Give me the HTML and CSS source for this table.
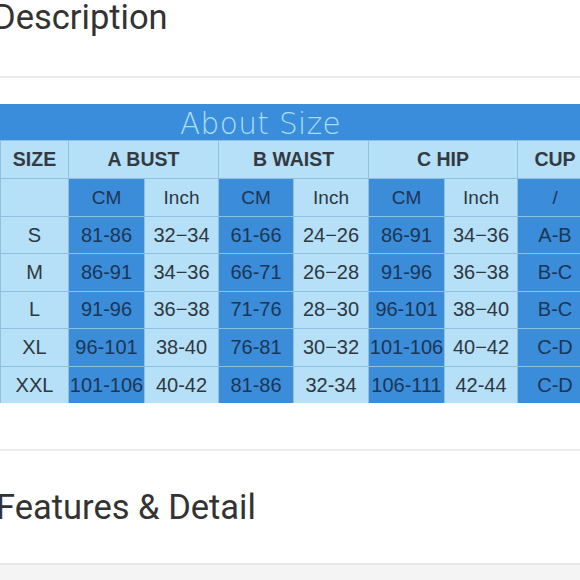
FILE: index.html
```html
<!DOCTYPE html>
<html>
<head>
<meta charset="utf-8">
<link rel="stylesheet" href="styles.css">
</head>
<body>
<div class="page">
  <section class="sec sec-desc">
    <h2 class="sec-title">Description</h2>
  </section>
  <section class="sec sec-table">
    <div class="size-chart">
      <div class="chart-title">About Size</div>
      <table class="chart">
        <colgroup>
          <col class="c-size"><col class="c-cm"><col class="c-in"><col class="c-cm2"><col class="c-in2"><col class="c-cm3"><col class="c-in3"><col class="c-cup">
        </colgroup>
        <tr class="head">
          <th>SIZE</th>
          <th colspan="2">A BUST</th>
          <th colspan="2">B WAIST</th>
          <th colspan="2">C HIP</th>
          <th>CUP</th>
        </tr>
        <tr class="sub">
          <td class="lt"></td>
          <td class="dk">CM</td><td class="lt">Inch</td>
          <td class="dk">CM</td><td class="lt">Inch</td>
          <td class="dk">CM</td><td class="lt">Inch</td>
          <td class="dk">/</td>
        </tr>
        <tr>
          <td class="lt">S</td>
          <td class="dk">81-86</td><td class="lt">32−34</td>
          <td class="dk">61-66</td><td class="lt">24−26</td>
          <td class="dk">86-91</td><td class="lt">34−36</td>
          <td class="dk">A-B</td>
        </tr>
        <tr>
          <td class="lt">M</td>
          <td class="dk">86-91</td><td class="lt">34−36</td>
          <td class="dk">66-71</td><td class="lt">26−28</td>
          <td class="dk">91-96</td><td class="lt">36−38</td>
          <td class="dk">B-C</td>
        </tr>
        <tr>
          <td class="lt">L</td>
          <td class="dk">91-96</td><td class="lt">36−38</td>
          <td class="dk">71-76</td><td class="lt">28−30</td>
          <td class="dk">96-101</td><td class="lt">38−40</td>
          <td class="dk">B-C</td>
        </tr>
        <tr>
          <td class="lt">XL</td>
          <td class="dk">96-101</td><td class="lt">38-40</td>
          <td class="dk">76-81</td><td class="lt">30−32</td>
          <td class="dk">101-106</td><td class="lt">40−42</td>
          <td class="dk">C-D</td>
        </tr>
        <tr>
          <td class="lt">XXL</td>
          <td class="dk">101-106</td><td class="lt">40-42</td>
          <td class="dk">81-86</td><td class="lt">32-34</td>
          <td class="dk">106-111</td><td class="lt">42-44</td>
          <td class="dk">C-D</td>
        </tr>
      </table>
    </div>
  </section>
  <section class="sec sec-feat">
    <h2 class="sec-title">Features &amp; Detail</h2>
  </section>
  <div class="rest"></div>
</div>
</body>
</html>
```
FILE: styles.css
```css
html, body {
  margin: 0;
  padding: 0;
  background: #ffffff;
}
body {
  width: 580px;
  height: 580px;
  overflow: hidden;
}
.page {
  width: 580px;
  overflow: hidden;
}
.sec {
  background: #ffffff;
}
.sec-title {
  margin: 0;
  font-family: Roboto, "Noto Sans", sans-serif;
  font-weight: 400;
  font-size: 34.5px;
  line-height: 34px;
  color: #333333;
  white-space: nowrap;
}
.sec-desc {
  height: 76px;
  border-bottom: 2px solid #ebebeb;
}
.sec-desc .sec-title {
  margin-left: -7px;
}
.sec-table {
  padding-top: 26px;
  height: 345px;
  border-bottom: 2px solid #ececec;
}
.size-chart {
  width: 592px;
}
.chart-title {
  height: 36px;
  background: #3a8ddb;
  color: #a9ddf8;
  font-family: "DejaVu Sans", sans-serif;
  font-weight: 200;
  font-size: 29.5px;
  line-height: 40px;
  padding-left: 180px;
  box-sizing: border-box;
  letter-spacing: 0.4px;
}
.chart {
  width: 592px;
  table-layout: fixed;
  border-collapse: collapse;
  font-family: "Liberation Sans", Arial, sans-serif;
  font-size: 20px;
  text-align: center;
}
.c-size { width: 68px; }
.c-cm { width: 76px; }
.c-in { width: 74px; }
.c-cm2 { width: 75px; }
.c-in2 { width: 75px; }
.c-cm3 { width: 76px; }
.c-in3 { width: 73px; }
.c-cup { width: 75px; }
.chart th, .chart td {
  padding: 0;
  border: 1px solid #8fc0df;
  white-space: nowrap;
}
.chart tr {
  height: 37.4px;
}
.chart tr.head, .chart tr.sub {
  height: 38px;
}
.chart th {
  background: #b5e0f7;
  color: #343a42;
  font-weight: 700;
  font-size: 19.5px;
}
.chart .lt {
  background: #b5e0f7;
  color: #2f3740;
}
.chart .dk {
  background: #3b8cd9;
  color: #1c3656;
}
.chart tr.sub td {
  font-size: 19px;
}
.chart tr:last-child td {
  border-bottom: none;
}
.sec-feat {
  height: 114px;
  padding-top: 39px;
  box-sizing: border-box;
  border-bottom: 2px solid #e9e9e9;
}
.sec-feat .sec-title {
  margin-left: -4px;
}
.rest {
  height: 20px;
  background: #f4f4f4;
}
```
